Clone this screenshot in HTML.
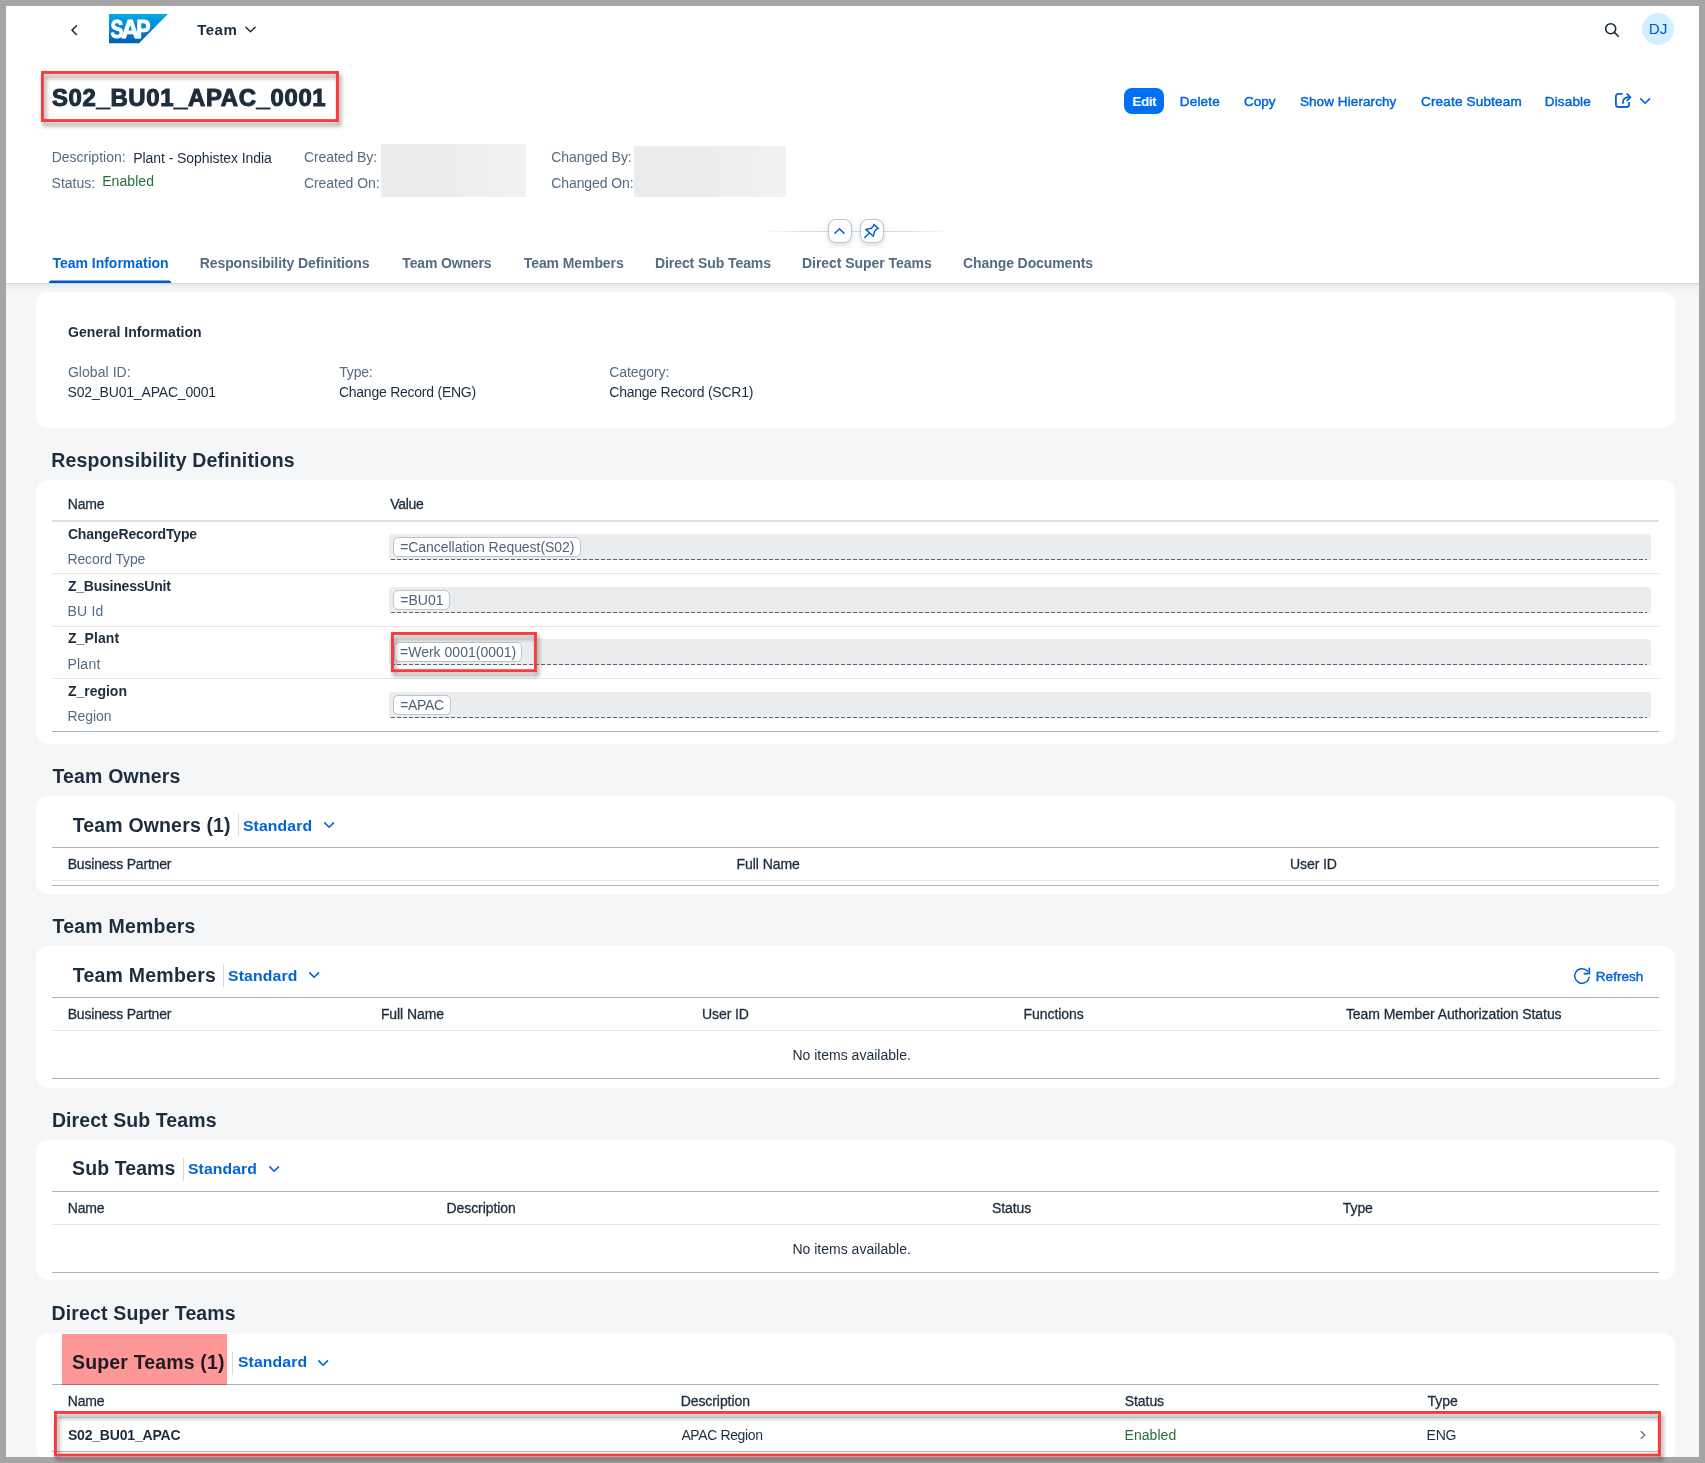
<!DOCTYPE html>
<html lang="en">
<head>
<meta charset="utf-8">
<title>Team - S02_BU01_APAC_0001</title>
<style>
*{box-sizing:border-box;margin:0;padding:0}
html,body{width:1705px;height:1463px;overflow:hidden;background:#a5a5a5}
body{font-family:"Liberation Sans",Arial,sans-serif;font-size:14px;color:#1d2d3e;position:relative}
#app{position:absolute;left:6px;top:6px;width:1693px;height:1451px;background:#f5f6f7;overflow:hidden}
.abs,.t{position:absolute;white-space:nowrap}
.t{line-height:16px;font-size:14px}
.b{font-weight:bold}
.lbl{color:#556b82}
.lnk{color:#0064d9}
.grn{color:#256f3a}
#hdr{position:absolute;left:0;top:0;width:1693px;height:277px;background:#fff}
#hdr:after{content:"";position:absolute;left:0;top:277px;width:100%;height:9px;background:linear-gradient(180deg,#d3d6d9 0,#d3d6d9 1px,#e8eaec 1px,#eef0f1 4px,#f5f6f7 9px)}
.card2{position:absolute;background:#fff;border-radius:12px}
.inp{position:absolute;background:#ebecee;border-radius:4px 4px 0 0}
.inp i{position:absolute;left:2px;right:4px;bottom:0;height:1px;background:repeating-linear-gradient(90deg,#51667c 0 4px,transparent 4px 6px)}
.tok{position:absolute;border:1px solid #bcc3ca;border-radius:5px;background:#fff}
.tk{color:#4f637a}
.sb{-webkit-text-stroke:.45px currentColor}
.ch{-webkit-text-stroke:.3px currentColor}
.t{letter-spacing:-.08px}
.t.b{letter-spacing:-.05px}
#ov{position:absolute;left:6px;top:6px;width:0;height:0}
</style>
</head>
<body>
<div id="app">
<div id="content">
<div class="card2" style="left:30.0px;top:286.0px;width:1639.0px;height:136.0px;"></div>
<div class="t b" id="g0" style="left:62.1px;top:318.0px;font-size:14px;line-height:16px;letter-spacing:0.03px;">General Information</div>
<div class="t lbl" id="g1" style="left:61.9px;top:358.0px;font-size:14px;line-height:16px;letter-spacing:0.06px;">Global ID:</div>
<div class="t " id="g2" style="left:61.6px;top:378.0px;font-size:14px;line-height:16px;letter-spacing:-0.18px;">S02_BU01_APAC_0001</div>
<div class="t lbl" id="g3" style="left:333.3px;top:358.0px;font-size:14px;line-height:16px;letter-spacing:-0.21px;">Type:</div>
<div class="t " id="g4" style="left:332.9px;top:378.0px;font-size:14px;line-height:16px;letter-spacing:-0.24px;">Change Record (ENG)</div>
<div class="t lbl" id="g5" style="left:603.2px;top:358.0px;font-size:14px;line-height:16px;letter-spacing:-0.07px;">Category:</div>
<div class="t " id="g6" style="left:603.3px;top:378.0px;font-size:14px;line-height:16px;letter-spacing:-0.24px;">Change Record (SCR1)</div>
<div class="t b" id="s1" style="left:45.2px;top:442.0px;font-size:19.5px;line-height:24px;letter-spacing:0.16px;">Responsibility Definitions</div>
<div class="card2" style="left:30.0px;top:474.0px;width:1639.0px;height:264.0px;"></div>
<div class="t ch" id="r0" style="left:61.8px;top:490.0px;font-size:14px;line-height:16px;letter-spacing:-0.20px;">Name</div>
<div class="t ch" id="r1" style="left:384.3px;top:490.0px;font-size:14px;line-height:16px;letter-spacing:-0.33px;">Value</div>
<div class="abs" style="left:46.0px;top:514.0px;width:1607.0px;height:2.0px;background:#e1e2e3"></div>
<div class="t b" id="rn0" style="left:61.9px;top:520.0px;font-size:14px;line-height:16px;letter-spacing:-0.13px;">ChangeRecordType</div>
<div class="t lbl" id="rd0" style="left:61.4px;top:545.0px;font-size:14px;line-height:16px;letter-spacing:-0.11px;">Record Type</div>
<div class="inp" style="left:383.0px;top:528.0px;width:1262.0px;height:26.0px;"><i></i></div>
<div class="tok" style="left:387.0px;top:531.0px;width:188.0px;height:20.0px;"></div>
<div class="t tk" id="rv0" style="left:394.2px;top:533.0px;font-size:14px;line-height:16px;letter-spacing:-0.05px;">=Cancellation Request(S02)</div>
<div class="t b" id="rn1" style="left:61.9px;top:572.0px;font-size:14px;line-height:16px;letter-spacing:-0.22px;">Z_BusinessUnit</div>
<div class="t lbl" id="rd1" style="left:61.4px;top:597.0px;font-size:14px;line-height:16px;letter-spacing:0.23px;">BU Id</div>
<div class="inp" style="left:383.0px;top:581.0px;width:1262.0px;height:26.0px;"><i></i></div>
<div class="tok" style="left:387.0px;top:584.0px;width:57.0px;height:20.0px;"></div>
<div class="t tk" id="rv1" style="left:394.2px;top:586.0px;font-size:14px;line-height:16px;letter-spacing:0.06px;">=BU01</div>
<div class="t b" id="rn2" style="left:61.9px;top:624.0px;font-size:14px;line-height:16px;letter-spacing:0.11px;">Z_Plant</div>
<div class="t lbl" id="rd2" style="left:61.4px;top:650.0px;font-size:14px;line-height:16px;letter-spacing:0.25px;">Plant</div>
<div class="inp" style="left:383.0px;top:633.0px;width:1262.0px;height:26.0px;"><i></i></div>
<div class="tok" style="left:388.0px;top:636.0px;width:128.0px;height:20.0px;"></div>
<div class="t tk" id="rv2" style="left:394.0px;top:638.0px;font-size:14px;line-height:16px;letter-spacing:0.01px;">=Werk 0001(0001)</div>
<div class="t b" id="rn3" style="left:61.9px;top:677.0px;font-size:14px;line-height:16px;letter-spacing:-0.01px;">Z_region</div>
<div class="t lbl" id="rd3" style="left:61.4px;top:702.0px;font-size:14px;line-height:16px;letter-spacing:-0.02px;">Region</div>
<div class="inp" style="left:383.0px;top:686.0px;width:1262.0px;height:26.0px;"><i></i></div>
<div class="tok" style="left:387.0px;top:689.0px;width:58.0px;height:20.0px;"></div>
<div class="t tk" id="rv3" style="left:394.2px;top:691.0px;font-size:14px;line-height:16px;letter-spacing:-0.32px;">=APAC</div>
<div class="abs" style="left:46.0px;top:567.0px;width:1607.0px;height:1.0px;background:#e5e5e5"></div>
<div class="abs" style="left:46.0px;top:620.0px;width:1607.0px;height:1.0px;background:#e5e5e5"></div>
<div class="abs" style="left:46.0px;top:672.3px;width:1607.0px;height:1.0px;background:#e5e5e5"></div>
<div class="abs" style="left:46.0px;top:725.2px;width:1607.0px;height:1.0px;background:#a8b3bd"></div>
<svg class="abs ovl" style="left:375.1px;top:615.9px;overflow:visible" width="165.9" height="60.1"><rect x="11.45" y="11.45" width="143.00" height="37.20" fill="none" stroke="#f93b3b" stroke-width="2.9" style="filter:drop-shadow(2px 4px 2px rgba(0,0,0,.4))"/></svg>
<div class="t b" id="s2" style="left:46.5px;top:758.0px;font-size:19.5px;line-height:24px;letter-spacing:0.15px;">Team Owners</div>
<div class="card2" style="left:30.0px;top:790.0px;width:1639.0px;height:98.0px;"></div>
<div class="t b" id="o0" style="left:66.7px;top:807.0px;font-size:19.5px;line-height:24px;letter-spacing:0.16px;">Team Owners (1)</div>
<div class="abs ovl" style="left:232.0px;top:807.4px;width:1.0px;height:23.0px;background:#d9d9d9"></div>
<div class="t b lnk" id="o1" style="left:236.6px;top:809.0px;font-size:15px;line-height:21px;transform-origin:0 50%;transform:scaleX(1.05);letter-spacing:0.11px;">Standard</div>
<svg class="abs" style="left:316.9px;top:815.2px" width="13" height="9" viewBox="0 0 13 9"><path d="M1.8 1.9 L6.15 6.25 L10.5 1.9" fill="none" stroke="#0064d9" stroke-width="1.6" stroke-linecap="round" stroke-linejoin="round"/></svg>
<div class="abs" style="left:46.0px;top:841.0px;width:1607.0px;height:1.0px;background:#a8b3bd"></div>
<div class="t ch" id="o2" style="left:61.7px;top:850.0px;font-size:14px;line-height:16px;letter-spacing:-0.19px;">Business Partner</div>
<div class="t ch" id="o3" style="left:730.6px;top:850.0px;font-size:14px;line-height:16px;">Full Name</div>
<div class="t ch" id="o4" style="left:1284.0px;top:850.0px;font-size:14px;line-height:16px;">User ID</div>
<div class="abs" style="left:46.0px;top:874.3px;width:1607.0px;height:1.0px;background:#e5e5e5"></div>
<div class="abs" style="left:46.0px;top:879.2px;width:1607.0px;height:1.0px;background:#a8b3bd"></div>
<div class="t b" id="s3" style="left:46.5px;top:908.0px;font-size:19.5px;line-height:24px;letter-spacing:0.22px;">Team Members</div>
<div class="card2" style="left:30.0px;top:940.0px;width:1639.0px;height:141.6px;"></div>
<div class="t b" id="m0" style="left:66.7px;top:957.0px;font-size:19.5px;line-height:24px;letter-spacing:0.24px;">Team Members</div>
<div class="abs ovl" style="left:217.0px;top:958.4px;width:1.0px;height:23.0px;background:#d9d9d9"></div>
<div class="t b lnk" id="m1" style="left:222.3px;top:959.0px;font-size:15px;line-height:21px;transform-origin:0 50%;transform:scaleX(1.05);letter-spacing:0.14px;">Standard</div>
<svg class="abs" style="left:302.3px;top:965.4px" width="13" height="9" viewBox="0 0 13 9"><path d="M1.8 1.9 L6.15 6.25 L10.5 1.9" fill="none" stroke="#0064d9" stroke-width="1.6" stroke-linecap="round" stroke-linejoin="round"/></svg>
<svg class="abs" style="left:1567px;top:961px" width="19" height="19" viewBox="0 0 19 19"><path d="M16.2 10.3A7.3 7.3 0 1 1 14.6 4.3" fill="none" stroke="#0064d9" stroke-width="1.5" stroke-linecap="round"/><path d="M16.3 1.5V6.7H11.5" fill="none" stroke="#0064d9" stroke-width="1.8" stroke-linecap="round" stroke-linejoin="miter"/></svg>
<div class="t sb lnk" id="m7" style="left:1589.8px;top:962.0px;font-size:13.5px;line-height:17px;letter-spacing:0.04px;">Refresh</div>
<div class="abs" style="left:46.0px;top:991.0px;width:1607.0px;height:1.0px;background:#a8b3bd"></div>
<div class="t ch" id="m2" style="left:61.7px;top:1000.0px;font-size:14px;line-height:16px;letter-spacing:-0.19px;">Business Partner</div>
<div class="t ch" id="m3" style="left:374.9px;top:1000.0px;font-size:14px;line-height:16px;">Full Name</div>
<div class="t ch" id="m4" style="left:696.0px;top:1000.0px;font-size:14px;line-height:16px;">User ID</div>
<div class="t ch" id="m5" style="left:1017.6px;top:1000.0px;font-size:14px;line-height:16px;">Functions</div>
<div class="t ch" id="m6" style="left:1339.9px;top:1000.0px;font-size:14px;line-height:16px;letter-spacing:-0.07px;">Team Member Authorization Status</div>
<div class="abs" style="left:46.0px;top:1024.0px;width:1607.0px;height:1.0px;background:#e5e5e5"></div>
<div class="t " id="m8" style="left:786.4px;top:1041.0px;font-size:14px;line-height:16px;letter-spacing:0.01px;">No items available.</div>
<div class="abs" style="left:46.0px;top:1072.0px;width:1607.0px;height:1.0px;background:#a8b3bd"></div>
<div class="t b" id="s4" style="left:45.9px;top:1102.0px;font-size:19.5px;line-height:24px;letter-spacing:0.09px;">Direct Sub Teams</div>
<div class="card2" style="left:30.0px;top:1134.0px;width:1639.0px;height:140.4px;"></div>
<div class="t b" id="u0" style="left:66.1px;top:1150.0px;font-size:19.5px;line-height:24px;letter-spacing:0.09px;">Sub Teams</div>
<div class="abs ovl" style="left:177.0px;top:1152.0px;width:1.0px;height:23.0px;background:#d9d9d9"></div>
<div class="t b lnk" id="u1" style="left:181.9px;top:1152.0px;font-size:15px;line-height:21px;transform-origin:0 50%;transform:scaleX(1.05);letter-spacing:0.09px;">Standard</div>
<svg class="abs" style="left:262.0px;top:1158.8px" width="13" height="9" viewBox="0 0 13 9"><path d="M1.8 1.9 L6.15 6.25 L10.5 1.9" fill="none" stroke="#0064d9" stroke-width="1.6" stroke-linecap="round" stroke-linejoin="round"/></svg>
<div class="abs" style="left:46.0px;top:1185.2px;width:1607.0px;height:1.0px;background:#a8b3bd"></div>
<div class="t ch" id="u2" style="left:61.8px;top:1194.0px;font-size:14px;line-height:16px;letter-spacing:-0.20px;">Name</div>
<div class="t ch" id="u3" style="left:440.5px;top:1194.0px;font-size:14px;line-height:16px;">Description</div>
<div class="t ch" id="u4" style="left:985.9px;top:1194.0px;font-size:14px;line-height:16px;">Status</div>
<div class="t ch" id="u5" style="left:1336.8px;top:1194.0px;font-size:14px;line-height:16px;">Type</div>
<div class="abs" style="left:46.0px;top:1218.3px;width:1607.0px;height:1.0px;background:#e5e5e5"></div>
<div class="t " id="u6" style="left:786.4px;top:1235.0px;font-size:14px;line-height:16px;letter-spacing:0.01px;">No items available.</div>
<div class="abs" style="left:46.0px;top:1266.0px;width:1607.0px;height:1.0px;background:#a8b3bd"></div>
<div class="t b" id="s5" style="left:45.6px;top:1295.0px;font-size:19.5px;line-height:24px;letter-spacing:0.14px;">Direct Super Teams</div>
<div class="card2" style="left:30.0px;top:1327.0px;width:1639.0px;height:127.5px;"></div>
<div class="t b" id="p0" style="left:66.1px;top:1344.0px;font-size:19.5px;line-height:24px;letter-spacing:0.15px;">Super Teams (1)</div>
<div class="abs ovl" style="left:226.0px;top:1345.5px;width:1.0px;height:23.0px;background:#d9d9d9"></div>
<div class="t b lnk" id="p1" style="left:231.5px;top:1345.0px;font-size:15px;line-height:21px;transform-origin:0 50%;transform:scaleX(1.05);letter-spacing:0.11px;">Standard</div>
<svg class="abs" style="left:311.0px;top:1352.6px" width="13" height="9" viewBox="0 0 13 9"><path d="M1.8 1.9 L6.15 6.25 L10.5 1.9" fill="none" stroke="#0064d9" stroke-width="1.6" stroke-linecap="round" stroke-linejoin="round"/></svg>
<div class="abs" style="left:46.0px;top:1378.3px;width:1607.0px;height:1.0px;background:#a8b3bd"></div>
<div class="abs ovl" style="left:56.0px;top:1328.0px;width:165.0px;height:51.4px;background:#ff9797;mix-blend-mode:multiply"></div>
<div class="t ch" id="p2" style="left:61.8px;top:1387.0px;font-size:14px;line-height:16px;letter-spacing:-0.20px;">Name</div>
<div class="t ch" id="p3" style="left:674.7px;top:1387.0px;font-size:14px;line-height:16px;">Description</div>
<div class="t ch" id="p4" style="left:1118.8px;top:1387.0px;font-size:14px;line-height:16px;">Status</div>
<div class="t ch" id="p5" style="left:1421.6px;top:1387.0px;font-size:14px;line-height:16px;">Type</div>
<div class="abs" style="left:46.0px;top:1411.0px;width:1607.0px;height:1.0px;background:#e5e5e5"></div>
<div class="t b" id="p6" style="left:61.9px;top:1421.0px;font-size:14px;line-height:16px;letter-spacing:-0.18px;">S02_BU01_APAC</div>
<div class="t " id="p7" style="left:675.4px;top:1421.0px;font-size:14px;line-height:16px;letter-spacing:-0.38px;">APAC Region</div>
<div class="t grn" id="p8" style="left:1118.6px;top:1421.0px;font-size:14px;line-height:16px;letter-spacing:0.04px;">Enabled</div>
<div class="t " id="p9" style="left:1420.6px;top:1421.0px;font-size:14px;line-height:16px;letter-spacing:-0.25px;">ENG</div>
<svg class="abs" style="left:1632px;top:1423px" width="10" height="12" viewBox="0 0 10 12"><path d="M3.1 2.5 L6.8 6 L3.1 9.5" fill="none" stroke="#5b738b" stroke-width="1.3" stroke-linecap="round" stroke-linejoin="round"/></svg>
<div class="abs" style="left:46.0px;top:1445.0px;width:1607.0px;height:1.0px;background:#a8b3bd"></div>
</div>
<div id="hdr">
<!-- SHELL -->
<svg class="abs" style="left:64px;top:18px" width="9" height="12" viewBox="0 0 9 12"><path d="M6.4 1.7 L2 6.1 L6.4 10.5" fill="none" stroke="#1d2d3e" stroke-width="1.5" stroke-linecap="round" stroke-linejoin="round"/></svg>
<svg class="abs" style="left:103px;top:8px" width="59" height="30" viewBox="0 0 59 30" role="img" aria-label="SAP"><title>SAP</title><defs><linearGradient id="sg" x1="0" y1="0" x2="0" y2="1"><stop offset="0" stop-color="#00aeef"/><stop offset=".3" stop-color="#0a8fdd"/><stop offset="1" stop-color="#0060b0"/></linearGradient></defs><path d="M0 0H59L30 29.3H0Z" fill="url(#sg)"/><g font-family="Liberation Sans,Arial,sans-serif" font-weight="bold" font-size="25.6" fill="#fff" stroke="#fff" stroke-width=".9" stroke-linejoin="round"><text transform="translate(1.4,24) scale(.76,1)">S</text><text transform="translate(12.3,24) scale(.97,1)">A</text><text transform="translate(27.3,24) scale(.84,1)">P</text></g></svg>
<div class="t b" id="team" style="left:191.2px;top:14px;font-size:15px;line-height:20px;letter-spacing:.5px">Team</div>
<svg class="abs" style="left:238px;top:19px" width="13" height="9" viewBox="0 0 13 9"><path d="M1.9 2.3 L6.5 6.7 L11.1 2.3" fill="none" stroke="#1d2d3e" stroke-width="1.5" stroke-linecap="round" stroke-linejoin="round"/></svg>
<svg class="abs" style="left:1598px;top:16px" width="16" height="16" viewBox="0 0 16 16"><circle cx="6.7" cy="6.7" r="5" fill="none" stroke="#1d2d3e" stroke-width="1.6"/><path d="M10.4 10.4 L14.3 14.3" stroke="#1d2d3e" stroke-width="1.6" stroke-linecap="round"/></svg>
<div class="abs" style="left:1636px;top:7px;width:32px;height:32px;border-radius:50%;background:#d1efff;color:#0057d2;font-size:15px;line-height:31px;text-align:center">DJ</div>

<!-- TITLE -->
<div class="abs b" id="title" style="left:46px;top:77px;font-size:23px;line-height:30px;letter-spacing:.61px;transform-origin:0 50%;transform:scaleX(1.04);-webkit-text-stroke:1px #1d2d3e">S02_BU01_APAC_0001</div>
<!-- ACTIONS -->
<div class="abs b" id="edit" style="left:1118px;top:82px;width:40px;height:26px;border-radius:8px;background:#0070f2;color:#fff;text-align:center;line-height:27px;font-size:13.4px;letter-spacing:-.35px;padding-left:.5px">Edit</div>
<svg class="abs" style="left:1608px;top:86px" width="19" height="17" viewBox="0 0 19 17"><path d="M8 1.8H4.4A2.5 2.5 0 0 0 1.9 4.3V12.5A2.5 2.5 0 0 0 4.4 15H12.6A2.5 2.5 0 0 0 15.1 12.5V10.7" fill="none" stroke="#0064d9" stroke-width="1.8" stroke-linecap="round"/><path d="M9 11.8V10.2C9 7.2 11.2 5.2 15.8 5.2" fill="none" stroke="#0064d9" stroke-width="1.8" stroke-linecap="butt"/><path d="M13.2 1.9L16.4 5.2L13.2 8.3" fill="none" stroke="#0064d9" stroke-width="1.8" stroke-linecap="round" stroke-linejoin="miter"/></svg>
<svg class="abs" style="left:1633px;top:90.9px" width="13" height="9" viewBox="0 0 13 9"><path d="M1.8 1.9 L6.15 6.25 L10.5 1.9" fill="none" stroke="#0064d9" stroke-width="1.6" stroke-linecap="round" stroke-linejoin="round"/></svg>
<!-- HEADER INFO -->
<div class="abs" style="left:375px;top:138px;width:145px;height:53px;background:linear-gradient(90deg,#ebecee 0%,#ecedef 50%,#f1f2f3 100%)"></div>
<div class="abs" style="left:628px;top:140px;width:152px;height:51px;background:linear-gradient(90deg,#ebecee 0%,#ecedef 50%,#f1f2f3 100%)"></div>
<!-- COLLAPSE / PIN -->
<div class="abs" style="left:758px;top:225px;width:64px;height:1px;background:linear-gradient(90deg,rgba(214,218,222,0),#d6dade 70%)"></div>
<div class="abs" style="left:878px;top:225px;width:66px;height:1px;background:linear-gradient(90deg,#d6dade 30%,rgba(214,218,222,0))"></div>
<div class="abs" style="left:846px;top:225px;width:8px;height:1px;background:#d6dade"></div>
<div class="abs" style="left:822px;top:213px;width:24px;height:24px;border:1px solid #bcc4cd;border-radius:8px;background:#fff;box-shadow:0 2px 5px rgba(85,107,130,.25)"><svg style="position:absolute;left:-1px;top:-1px" width="24" height="24" viewBox="0 0 24 24"><path d="M6.9 14.3 L11.45 9.8 L16 14.3" fill="none" stroke="#0064d9" stroke-width="1.6" stroke-linecap="round" stroke-linejoin="round"/></svg></div>
<div class="abs" style="left:854px;top:213px;width:24px;height:24px;border:1px solid #bcc4cd;border-radius:8px;background:#fff;box-shadow:0 2px 5px rgba(85,107,130,.25)"><svg style="position:absolute;left:-1px;top:-1px" width="24" height="24" viewBox="0 0 24 24"><path d="M13.7 5.4 L18.5 9.5 M14.3 6 L11.4 9.2 L5.8 10.4 L13.2 17.2 L14.8 12 L17.8 8.9 M9.4 14 L4.7 18.5" fill="none" stroke="#0064d9" stroke-width="1.5" stroke-linecap="round" stroke-linejoin="round"/></svg></div>
<!-- TABS -->
<svg class="abs" style="left:43px;top:274px" width="122" height="4" viewBox="0 0 122 4"><path d="M0 3V2.6A2 2 0 0 1 2 .5H120A2 2 0 0 1 122 2.6V3Z" fill="#0057d2"/></svg>
</div>
<div class="t lbl" id="h1" style="left:45.7px;top:143.0px;font-size:14px;line-height:16px;letter-spacing:0.00px;">Description:</div>
<div class="t " id="h2" style="left:127.3px;top:144.0px;font-size:14px;line-height:16px;letter-spacing:-0.07px;">Plant - Sophistex India</div>
<div class="t lbl" id="h3" style="left:45.6px;top:169.0px;font-size:14px;line-height:16px;letter-spacing:-0.01px;">Status:</div>
<div class="t grn" id="h4" style="left:96.2px;top:167.0px;font-size:14px;line-height:16px;letter-spacing:0.07px;">Enabled</div>
<div class="t lbl" id="h5" style="left:297.9px;top:143.0px;font-size:14px;line-height:16px;letter-spacing:-0.07px;">Created By:</div>
<div class="t lbl" id="h6" style="left:297.9px;top:169.0px;font-size:14px;line-height:16px;letter-spacing:-0.05px;">Created On:</div>
<div class="t lbl" id="h7" style="left:545.3px;top:143.0px;font-size:14px;line-height:16px;letter-spacing:-0.05px;">Changed By:</div>
<div class="t lbl" id="h8" style="left:545.3px;top:169.0px;font-size:14px;line-height:16px;letter-spacing:-0.10px;">Changed On:</div>
<div class="t b lnk" id="t1" style="left:46.4px;top:249.0px;font-size:14px;line-height:16px;letter-spacing:-0.01px;">Team Information</div>
<div class="t b lbl" id="t2" style="left:193.7px;top:249.0px;font-size:14px;line-height:16px;letter-spacing:-0.08px;">Responsibility Definitions</div>
<div class="t b lbl" id="t3" style="left:396.3px;top:249.0px;font-size:14px;line-height:16px;letter-spacing:-0.16px;">Team Owners</div>
<div class="t b lbl" id="t4" style="left:517.8px;top:249.0px;font-size:14px;line-height:16px;letter-spacing:-0.09px;">Team Members</div>
<div class="t b lbl" id="t5" style="left:649.0px;top:249.0px;font-size:14px;line-height:16px;letter-spacing:-0.08px;">Direct Sub Teams</div>
<div class="t b lbl" id="t6" style="left:796.0px;top:249.0px;font-size:14px;line-height:16px;letter-spacing:-0.04px;">Direct Super Teams</div>
<div class="t b lbl" id="t7" style="left:957.1px;top:249.0px;font-size:14px;line-height:16px;letter-spacing:-0.10px;">Change Documents</div>
<div class="t sb lnk" id="a1" style="left:1173.8px;top:87.0px;font-size:13.5px;line-height:17px;letter-spacing:0.18px;">Delete</div>
<div class="t sb lnk" id="a2" style="left:1238.1px;top:87.0px;font-size:13.5px;line-height:17px;letter-spacing:0.00px;">Copy</div>
<div class="t sb lnk" id="a3" style="left:1293.9px;top:87.0px;font-size:13.5px;line-height:17px;letter-spacing:0.09px;">Show Hierarchy</div>
<div class="t sb lnk" id="a4" style="left:1415.0px;top:87.0px;font-size:13.5px;line-height:17px;letter-spacing:0.18px;">Create Subteam</div>
<div class="t sb lnk" id="a5" style="left:1538.8px;top:87.0px;font-size:13.5px;line-height:17px;letter-spacing:0.16px;">Disable</div>
<svg class="abs ovl" style="left:25.1px;top:54.9px;overflow:visible" width="317.9" height="71.0"><rect x="11.45" y="11.45" width="295.00" height="48.10" fill="none" stroke="#f93b3b" stroke-width="2.9" style="filter:drop-shadow(2px 4px 2px rgba(0,0,0,.4))"/></svg>
</div>
<div id="ov"><svg class="abs ovl" style="left:38.1px;top:1395.2px;overflow:visible" width="1626.9" height="65.5"><rect x="11.45" y="11.45" width="1604.00" height="42.60" fill="none" stroke="#f93b3b" stroke-width="2.9" style="filter:drop-shadow(2px 4px 2px rgba(0,0,0,.4))"/></svg></div>
</body>
</html>
